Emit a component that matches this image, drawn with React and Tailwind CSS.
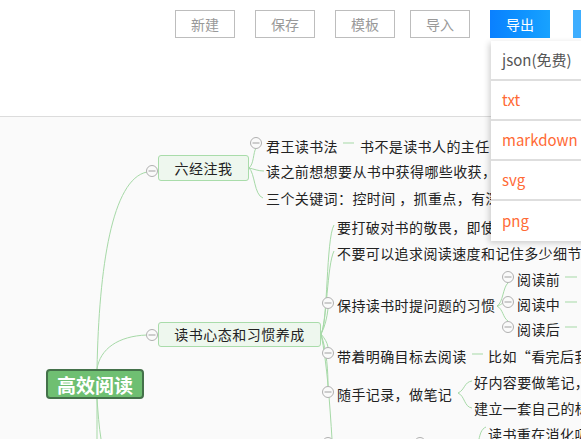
import React from 'react'

const font = { fontFamily: '"Microsoft YaHei", "Noto Sans CJK SC", "Noto Sans", sans-serif' }

// collapse button that sits on a branch
const Fold = ({ cx, cy }) => (
    <g>
        <circle cx={cx} cy={cy} r="5.5" fill="#fafafa" stroke="#b0b0b0" strokeWidth="1" />
        <line x1={cx - 3.5} y1={cy} x2={cx + 3.5} y2={cy} stroke="#a0a0a0" strokeWidth="1" />
    </g>
)

const Links = () => (
    <svg className="absolute inset-0" width="581" height="322" viewBox="0 0 581 322" fill="none">
        <g stroke="#a6d9a7" strokeWidth="1" fill="none">
            {/* root */}
            <path d="M97 252 C 99 150, 112 62, 147 55" />
            <path d="M97 252 C 100 232, 118 219, 147 218" />
            <path d="M97 282 C 97 295, 97 310, 97 322" />
            <path d="M97 282 C 98 295, 99 310, 101 322" />
            {/* 六经注我 */}
            <path d="M249 51 C 254 47, 253 36, 256 31" />
            <path d="M249 51 C 254 52, 258 54, 264 54" />
            <path d="M249 51 C 255 56, 254 78, 263 81" />
            <path d="M343 26 L 354 26" />
            {/* 读书心态和习惯养成 */}
            <path d="M321 217 C 328 205, 326 122, 334 108" />
            <path d="M321 217 C 327 205, 327 148, 334 134" />
            <path d="M321 217 C 325 210, 327 200, 328 192" />
            <path d="M321 217 C 325 222, 327 225, 328 230" />
            <path d="M321 217 C 327 235, 328 255, 328 269" />
            <path d="M321 217 C 327 245, 330 290, 332 322" />
            {/* 保持读书时提问题的习惯 */}
            <path d="M497 189 C 503 186, 503 170, 508 166" />
            <path d="M497 189 C 501 188, 503 186, 503 185" />
            <path d="M497 189 C 503 192, 503 201, 508 204" />
            <path d="M565 160 L 577 160" />
            <path d="M565 185 L 577 185" />
            <path d="M565 210 L 577 210" />
            {/* 带着明确目标去阅读 */}
            <path d="M472 237 L 483 237" />
            {/* 随手记录，做笔记 */}
            <path d="M458 276 C 465 273, 464 265, 472 264" />
            <path d="M458 276 C 465 279, 464 290, 472 291" />
            <path d="M486 310 C 481 312, 480 318, 479 322" />
        </g>
        <Fold cx={152} cy={54} />
        <Fold cx={152} cy={218} />
        <Fold cx={256} cy={26} />
        <Fold cx={328} cy={186} />
        <Fold cx={328} cy={236} />
        <Fold cx={328} cy={275} />
        <Fold cx={508} cy={160} />
        <Fold cx={508} cy={185} />
        <Fold cx={508} cy={210} />
        <Fold cx={328} cy={326} />
        <Fold cx={420} cy={326} />
    </svg>
)

const Leaf = ({ className, children }) => (
    <div className={'absolute whitespace-nowrap text-[14px] leading-[20px] tracking-[0.4px] text-[#222] ' + className}>{children}</div>
)

const App = () => {
    return (
        <div className="w-[581px] h-[439px] overflow-hidden relative bg-white" style={font}>
            <div className="h-[117px] border-b border-[#dcdcdc] bg-white flex items-start pt-[10px] pl-[175px] whitespace-nowrap">
                <button className="w-[60px] h-[28px] shrink-0 border border-[#bdbdbd] text-[14px] text-[#999]">新建</button>
                <button className="w-[60px] h-[28px] shrink-0 ml-[20px] border border-[#bdbdbd] text-[14px] text-[#999]">保存</button>
                <button className="w-[60px] h-[28px] shrink-0 ml-[20px] border border-[#bdbdbd] text-[14px] text-[#999]">模板</button>
                <button className="w-[60px] h-[28px] shrink-0 ml-[15px] border border-[#bdbdbd] text-[14px] text-[#999]">导入</button>
                <button className="w-[60px] h-[28px] shrink-0 ml-[20px] bg-linear-to-r from-[#0a80ff] to-[#18a2ff] text-[14px] text-white">导出</button>
                <button className="w-[60px] h-[28px] shrink-0 ml-[23px] bg-[#3eaeff] text-[14px] text-white">分享</button>
            </div>

            <div className="relative h-[322px] bg-[#fafafa] overflow-hidden">
                <Links />

                <div className="absolute left-[46px] top-[252px] w-[98px] h-[30px] rounded-[4px] border-2 border-[#44714a] bg-[#6fbf72] flex items-center justify-center text-white font-bold text-[19px] leading-none">
                    高效阅读
                </div>

                <div className="absolute left-[158px] top-[38px] w-[91px] h-[26px] rounded-[3px] border border-[#a9dcaa] bg-[#eef7ee] flex items-center justify-center text-[14px] text-[#222] tracking-[0.5px]">
                    六经注我
                </div>
                <div className="absolute left-[158px] top-[205px] w-[163px] h-[25px] rounded-[3px] border border-[#a9dcaa] bg-[#eef7ee] flex items-center justify-center text-[14px] text-[#222] tracking-[0.5px]">
                    读书心态和习惯养成
                </div>

                <Leaf className="left-[266px] top-[19px]">君王读书法</Leaf>
                <Leaf className="left-[360px] top-[19px]">书不是读书人的主任，而是读书人的仆人</Leaf>
                <Leaf className="left-[266px] top-[44px]">读之前想想要从书中获得哪些收获，带着问题去读</Leaf>
                <Leaf className="left-[266px] top-[71px]">三个关键词：控时间 ，抓重点，有深度</Leaf>

                <Leaf className="left-[337px] top-[100px]">要打破对书的敬畏，即使是名著也可以批判</Leaf>
                <Leaf className="left-[337px] top-[126px]">不要可以追求阅读速度和记住多少细节</Leaf>
                <Leaf className="left-[337px] top-[178px]">保持读书时提问题的习惯</Leaf>
                <Leaf className="left-[517px] top-[152px]">阅读前</Leaf>
                <Leaf className="left-[517px] top-[177px]">阅读中</Leaf>
                <Leaf className="left-[517px] top-[202px]">阅读后</Leaf>
                <Leaf className="left-[337px] top-[229px]">带着明确目标去阅读</Leaf>
                <Leaf className="left-[488px] top-[229px]">比如“看完后我要学会什么”</Leaf>
                <Leaf className="left-[337px] top-[267px]">随手记录，做笔记</Leaf>
                <Leaf className="left-[474px] top-[255px]">好内容要做笔记，随时记录</Leaf>
                <Leaf className="left-[474px] top-[281px]">建立一套自己的标记体系</Leaf>
                <Leaf className="left-[488px] top-[307px]">读书重在消化吸收</Leaf>
            </div>

            {/* export menu */}
            <div className="absolute left-[491px] top-[41px] w-[130px] bg-white shadow-[-2px_2px_6px_rgba(0,0,0,0.18)] text-[15px]">
                <div className="h-[40px] border-b-2 border-[#dedede] flex items-center pl-[11px] text-[#555]">json(免费)</div>
                <div className="h-[40px] border-b-2 border-[#dedede] flex items-center pl-[11px] text-[#ff6a35]">txt</div>
                <div className="h-[40px] border-b-2 border-[#dedede] flex items-center pl-[11px] text-[#ff6a35]">markdown</div>
                <div className="h-[40px] border-b-2 border-[#dedede] flex items-center pl-[11px] text-[#ff6a35]">svg</div>
                <div className="h-[40px] flex items-center pl-[11px] text-[#ff6a35]">png</div>
            </div>
        </div>
    )
}

export default App
